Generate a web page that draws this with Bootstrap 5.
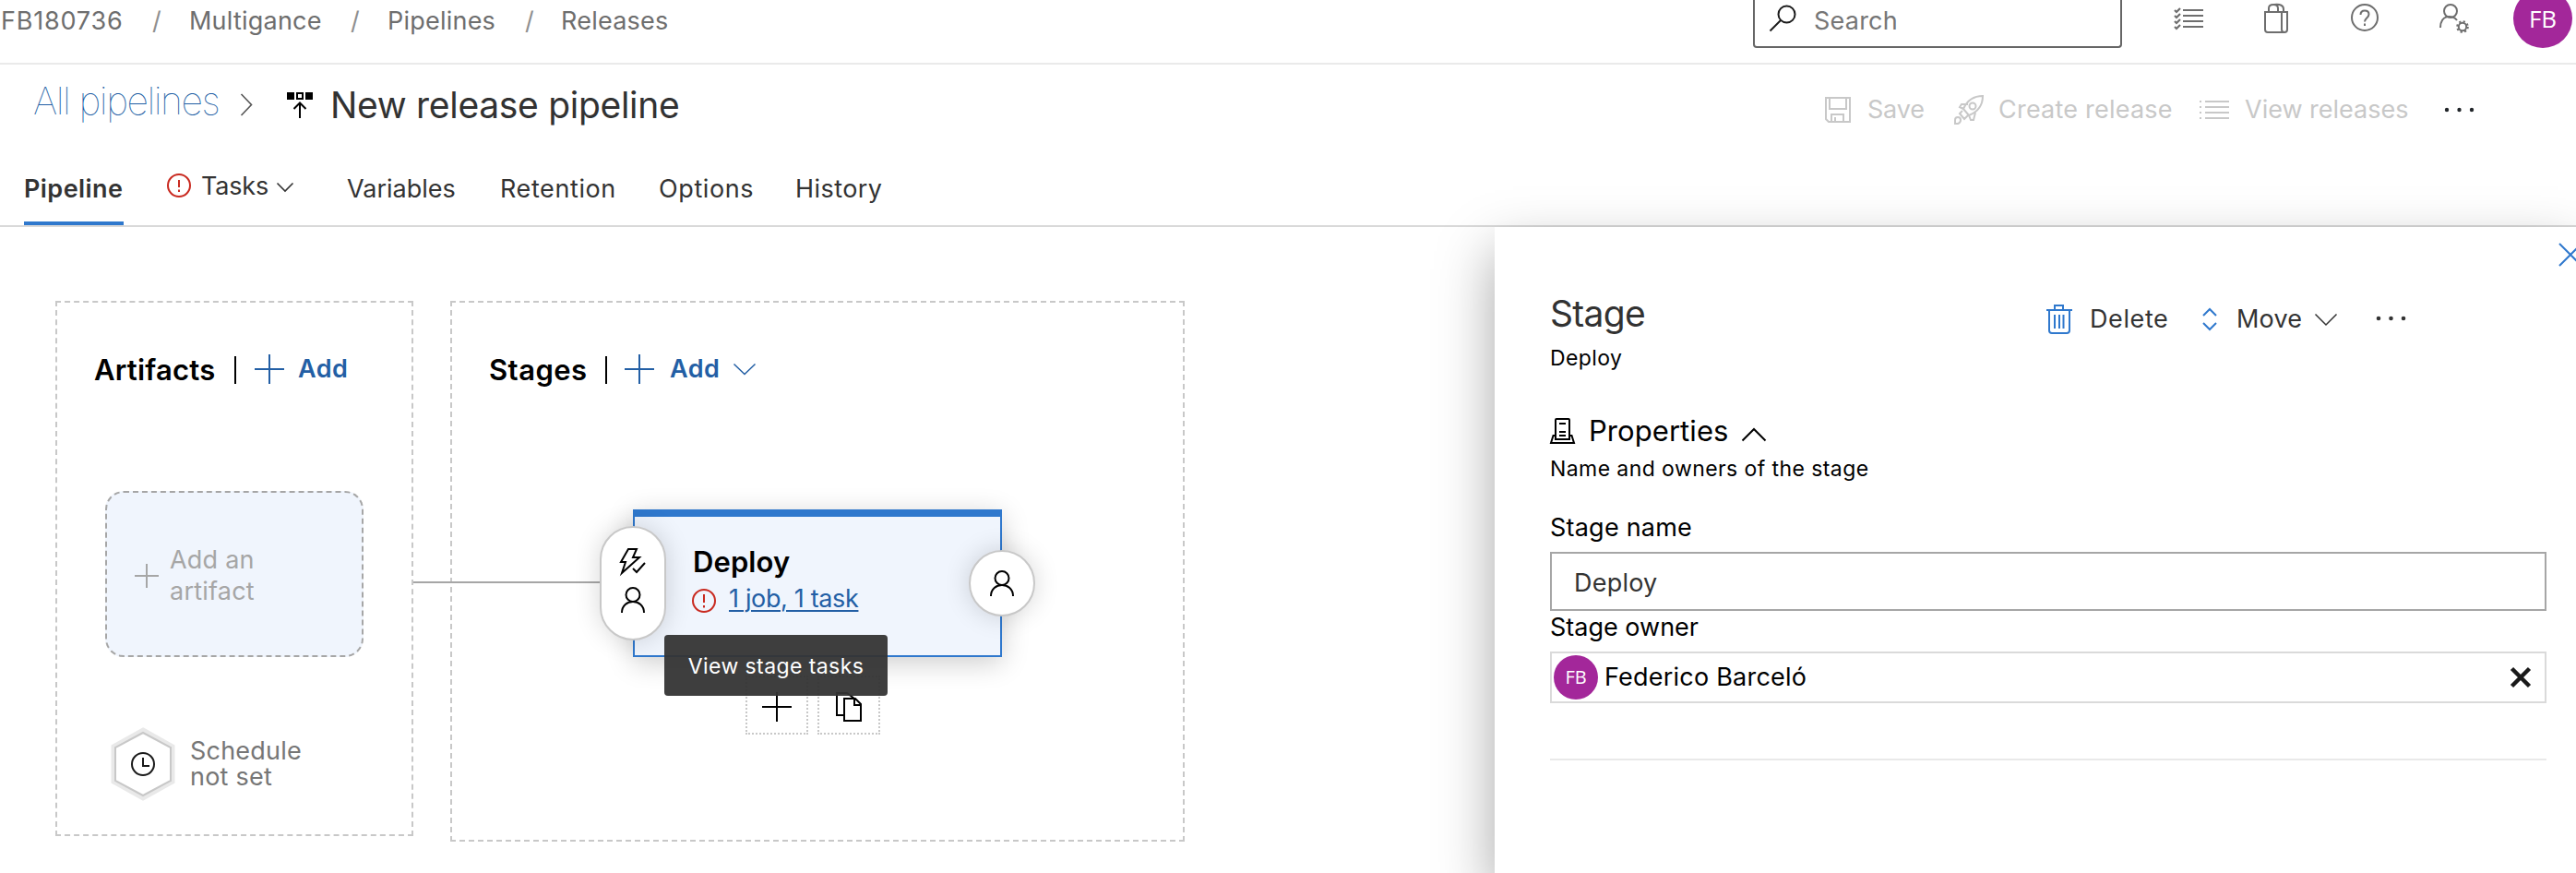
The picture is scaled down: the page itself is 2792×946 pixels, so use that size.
<!DOCTYPE html>
<html lang="en">
<head>
<meta charset="utf-8">
<title>New release pipeline</title>
<link href="https://cdn.jsdelivr.net/npm/bootstrap@5.3.0/dist/css/bootstrap.min.css" rel="stylesheet">
<style>
  body { font-family: Inter, "Liberation Sans", sans-serif; font-size: 27px; line-height: 44px; letter-spacing: .22px; color: #000; background: #fff; width: 2792px; height: 946px; overflow: hidden; white-space: nowrap; }
  svg { display: block; fill: none; stroke: currentColor; stroke-width: 2; overflow: visible; }
  a { color: inherit; text-decoration: none; }
  .ls-n2 { letter-spacing: -.2px; } .ls-0 { letter-spacing: 0; } .ls-4 { letter-spacing: .44px; } .ls-6 { letter-spacing: .6px; } .ls-8 { letter-spacing: .81px; }
  /* column tracks of the one-line rows */
  .tracks { display: grid; }
  .top-bar { height: 70px; border-bottom: 2px solid #eaeaea; color: #6e6e6e; grid-template-columns: 1900px 456px 98px 94px 96px 80px 64px; }
  .crumbs { grid-template-columns: 164px 40px 175px 40px 149px 39px auto; padding: 1px 0 0 1px; }
  .crumbs .sep { color: #8f8f8f; }
  .search-box { width: 400px; height: 52px; border: 2px solid #666; border-top: 0; border-radius: 0 0 4px 4px; color: #767676; padding: 1px 0 0 16px; gap: 20px; }
  .search-box svg { margin-top: 5px; color: #1a1a1a; }
  .face { background: #a3279a; color: #fff; border-radius: 50%; font-family: "Open Sans", sans-serif; font-weight: 400; letter-spacing: 0; display: flex; align-items: center; justify-content: center; flex: none; }
  .face-lg { width: 64px; height: 64px; margin-top: -12px; font-size: 26px; }
  .face-sm { width: 48px; height: 48px; font-size: 20px; }
  .title-bar { height: 88px; grid-template-columns: 36px 224px 50px 48px 1620px auto; }
  .crumb-link { font-size: 41px; font-weight: 100; letter-spacing: -1.5px; color: #235fa5; padding-bottom: 10px; }
  .page-title { font-size: 39px; letter-spacing: -.3px; color: #323232; }
  .tools { grid-template-columns: 46px 94px 48px 218px 49px 214px auto; color: #c8c8c8; padding-top: 9px; }
  .tab-bar { height: 88px; border-bottom: 2px solid #d9d9d9; color: #333; padding-left: 26px; grid-template-columns: 155px 37px 82px 76px 166px 172px 148px auto; }
  .tab-bar > * { height: 86px; padding-top: 25px; }
  .tab-bar .active { font-weight: 600; border-bottom: 4px solid #2f78cd; width: 108px; }
  .tab-bar .up { padding-top: 22px; }
  .tab-bar .tab-caret { padding-top: 40px; }
  .warn { stroke: #c92a20; }
  .board { width: 1620px; height: 700px; padding: 80px 0 0 60px; gap: 40px; }
  .zone { border: 2px dashed #c8c8c8; }
  .zone-a { width: 388px; height: 580px; } .zone-s { width: 796px; height: 586px; }
  .zone-head { height: 44px; margin-top: 51px; }
  .zone-a .zone-head { margin-left: 40px; grid-template-columns: 152px 22px 47px auto; }
  .zone-s .zone-head { margin-left: 40px; grid-template-columns: 126px 21px 49px 69px auto; }
  .zone-name { font-size: 31px; font-weight: 600; }
  .rule-v { width: 2px; height: 30px; background: #000; }
  .add { color: #235fa5; font-weight: 600; margin-top: -2px; }
  .add-slot { width: 280px; height: 180px; margin: 109px 0 0 52px; border: 2px dashed #a6a6a6; border-radius: 20px; background: #f0f5fd; color: #a6a6a6; padding: 4px 0 0 30px; gap: 12px; line-height: 34px; }
  .schedule { margin: 76px 0 0 57px; gap: 15px; color: #767676; line-height: 28px; }
  .wire { position: absolute; left: -42px; top: 302px; width: 204px; height: 2px; background: #a6a6a6; }
  .stage { width: 400px; height: 160px; margin: 129px 0 0 196px; border: 2px solid #2f78cd; border-top-width: 8px; background: #f0f5fd; box-shadow: 0 6px 28px rgba(0,0,0,.2); padding: 27px 0 0 62px; }
  .stage-name { font-size: 31px; font-weight: 600; letter-spacing: .1px; height: 46px; padding-left: 1px; }
  .stage-link { color: #235fa5; letter-spacing: -.35px; line-height: 32px; text-decoration: underline; text-decoration-thickness: 2px; text-underline-offset: 3px; margin-left: 14px; }
  .gate { position: absolute; background: #fff; border: 2px solid #c8c8c8; border-radius: 36px; width: 72px; box-shadow: 0 0 28px rgba(0,0,0,.16); display: flex; flex-direction: column; align-items: center; justify-content: center; gap: 14px; }
  .gate-pre { left: -38px; top: 10px; height: 124px; padding-bottom: 6px; } .gate-post { right: -38px; top: 36px; height: 72px; }
  .tip { position: absolute; left: 32px; top: 128px; width: 242px; height: 66px; border-radius: 4px; background: rgba(52,52,52,.95); color: #fff; font-size: 23px; letter-spacing: .42px; line-height: 68px; text-align: center; z-index: 3; }
  .quick { margin: 20px 0 0 318px; gap: 10px; }
  .quick > div { width: 68px; height: 64px; border: 2px dotted #c8c8c8; padding: 16px; }
  .side { width: 1172px; height: 700px; background: #fff; box-shadow: 0 26px 58px rgba(0,0,0,.35); padding: 0 32px 0 60px; z-index: 2; }
  .side-head { height: 108px; padding-top: 52px; }
  .side-title { font-size: 39px; line-height: 48px; letter-spacing: -.7px; color: #323232; width: 538px; }
  .side-tools { grid-template-columns: 47px 122px 37px 85px 64px auto; color: #333; padding-top: 4px; }
  .blue { color: #2f78cd; }
  .close { height: 18px; padding: 18px 0 0 1094px; color: #2f78cd; }
  .small-t { font-size: 23px; letter-spacing: .42px; line-height: 32px; }
  .field-label { display: block; margin-top: 26px; }
  .owner-label { display: block; line-height: 36px; margin-bottom: 8px; }
  .field { height: 64px; border: 2px solid #a6a6a6; padding: 10px 0 0 24px; color: #333; }
  .owner { height: 56px; border: 2px solid #dadada; padding: 0 15px 0 2px; gap: 7px; }
  .side-end { height: 62px; border-bottom: 2px solid #e9e9e9; }
  .sect { height: 44px; margin: 41px 0 3px; gap: 15px; font-size: 31px; letter-spacing: .06px; }
</style>
</head>
<body>
<header class="tracks top-bar">
  <nav class="tracks crumbs">
    <a class="ls-8" href="#">FB180736</a><span class="sep">/</span><a href="#">Multigance</a><span class="sep">/</span><a href="#">Pipelines</a><span class="sep">/</span><a href="#">Releases</a>
  </nav>
  <div class="search-box d-flex align-items-start">
    <svg width="28" height="28"><circle cx="18.500" cy="9.500" r="9"/><path d="M12 16 .5 27.500"/></svg>
    <span>Search</span>
  </div>
  <svg width="32" height="36"><path d="M10 11h22M10 17h22M10 23h22M10 29h22"/><path stroke-width="2.200" d="m1 11 2 2 4-4M1 17l2 2 4-4M1 23l2 2 4-4M1 29l2 2 4-4"/></svg>
  <svg width="28" height="38"><path d="M1 13h24v19q0 3-3 3H4q-3 0-3-3zM19 13v19q0 3 3 3M5 13V9q0-4 5-4t5 4v4M11 5q10-1 10 5v3"/></svg>
  <svg width="32" height="38"><circle cx="15" cy="19" r="14"/><path d="M10.500 16q0-4.500 4.500-4.500t4.500 4c0 4-4.500 4-4.500 8M15 25.500v2.500"/></svg>
  <svg width="34" height="40"><circle cx="12" cy="12" r="7"/><path d="M1 30c0-15 14-14 18-8"/><circle cx="25" cy="29" r="4.200"/><circle cx="25" cy="29" r="5.800" stroke-dasharray="2.200 2.355"/></svg>
  <div class="face face-lg">FB</div>
</header>

<div class="tracks title-bar align-items-center">
  <span></span><a class="crumb-link" href="#">All pipelines</a>
  <svg width="14" height="24"><path d="m1.500 0 11 11.500-11 11.500" stroke="#555" stroke-width="1.600"/></svg>
  <svg width="30" height="30"><path fill="currentColor" stroke="none" d="M1 1h8v8H1zM21 1h8v8h-8z"/><path d="M12 2h6v6h-6zM15 29V14M8.500 19l6.500-6.500 6.500 6.500"/></svg>
  <span class="page-title">New release pipeline</span>
  <div class="tracks tools align-items-center">
    <svg width="28" height="28"><path d="M1 1h26v26H4l-3-3zM5 1v12h18V1M7 27v-8h13v8M11 27v-5"/></svg><span class="ls-n2">Save</span>
    <svg width="32" height="32"><path d="M31 1c-10 0-17 5-21 14l6 7c10-4 15-11 15-21zM10 15l-4-2 2-3h7M16 22l2 5h3l2-8M9 17l-3 3 5 6 4-4M1 31v-4q0-3 3-3t3 3-3 4z"/><circle cx="20" cy="12" r="3.500"/></svg><span>Create release</span>
    <svg width="32" height="20"><path d="M6 1h26M6 7h26M6 13h26M6 19h26"/><path d="M0 1h2M0 7h2M0 13h2M0 19h2"/></svg><span class="ls-0">View releases</span>
    <svg width="34" height="6" class="text-dark"><g fill="currentColor" stroke="none"><circle cx="5" cy="3" r="2.200"/><circle cx="18.500" cy="3" r="2.200"/><circle cx="32" cy="3" r="2.200"/></g></svg>
  </div>
</div>

<nav class="tracks tab-bar">
  <a class="active ls-4" href="#">Pipeline</a>
  <span class="up"><svg class="mt-2" width="26" height="28"><g class="warn"><circle cx="13" cy="13" r="12"/><path d="M13 7v8M13 17.500v2.500"/></g></svg></span>
  <a class="up ls-n2" href="#">Tasks</a>
  <span class="tab-caret"><svg width="18" height="10"><path d="m.5.5 8.500 8.500L17.500.5" stroke-width="1.600"/></svg></span>
  <a class="ls-0" href="#">Variables</a><a class="ls-6" href="#">Retention</a><a class="ls-6" href="#">Options</a><a class="ls-4" href="#">History</a>
</nav>

<main class="d-flex">
  <div class="board d-flex align-items-start flex-shrink-0">
    <section class="zone zone-a">
      <div class="tracks zone-head align-items-center">
        <span class="zone-name">Artifacts</span><span class="rule-v"></span>
        <svg width="32" height="32" class="add"><path d="M16 0v32M0 16h32"/></svg><a class="add ls-4" href="#">Add</a>
      </div>
      <div class="add-slot d-flex align-items-center">
        <svg width="26" height="26"><path d="M13 0v26M0 13h26"/></svg>
        <span>Add an<br>artifact</span>
      </div>
      <div class="schedule d-flex align-items-center">
        <svg width="72" height="80"><path d="M36 3 68 21v38L36 77 4 59V21z" stroke="#e9e9e9" stroke-width="5"/><path d="M36 6 66 22v36L36 74 6 58V22z" stroke="#c8c8c8" fill="#fff"/><g stroke="#1a1a1a"><circle cx="36" cy="40" r="12"/><path d="M36 33v9h7"/></g></svg>
        <span>Schedule<br>not set</span>
      </div>
    </section>
    <section class="zone zone-s position-relative">
      <div class="wire"></div>
      <div class="tracks zone-head align-items-center">
        <span class="zone-name ls-4">Stages</span><span class="rule-v"></span>
        <svg width="32" height="32" class="add"><path d="M16 0v32M0 16h32"/></svg><a class="add ls-4" href="#">Add</a>
        <svg width="24" height="12" class="add"><path d="m.5.5 11.500 11 11.500-11" stroke-width="1.500"/></svg>
      </div>
      <div class="stage position-relative">
        <div class="stage-name">Deploy</div>
        <div class="d-flex align-items-center">
          <svg width="26" height="26" class="mt-1"><g class="warn"><circle cx="13" cy="13" r="12"/><path d="M13 6v9M13 18v2.500"/></g></svg>
          <a class="stage-link" href="#">1 job, 1 task</a>
        </div>
        <div class="gate gate-pre">
          <svg width="28" height="28"><path d="M9 1h9l-4 9h7L2 27l4-12H1zM14 22l4 4 9-10"/></svg>
          <svg width="26" height="28"><circle cx="13" cy="8.500" r="7.500"/><path d="M1 28c0-16 24-16 24 0"/></svg>
        </div>
        <div class="gate gate-post"><svg width="26" height="28"><circle cx="13" cy="8.500" r="7.500"/><path d="M1 28c0-16 24-16 24 0"/></svg></div>
        <div class="tip">View stage tasks</div>
      </div>
      <div class="quick d-flex">
        <div><svg width="32" height="32"><path d="M16 0v32M0 16h32"/></svg></div>
        <div><svg width="32" height="32"><path d="M11 25H3V1h11l8 6M11 7h12l6 6v18H11zM22 7v7h7"/></svg></div>
      </div>
    </section>
  </div>

  <aside class="side position-relative flex-shrink-0">
    <div class="close"><svg width="24" height="24"><path d="m0 0 24 24M24 0 0 24"/></svg></div>
    <div class="side-head d-flex">
      <h1 class="side-title m-0 fw-normal">Stage</h1>
      <div class="tracks side-tools align-items-center">
        <svg width="28" height="32" class="blue"><path d="M0 6h28M3 6v22q0 3 3 3h16q3 0 3-3V6M9 5V1h9v4M9 11v15M14 11v15M18.500 11v15"/></svg><span class="ls-6">Delete</span>
        <svg width="16" height="24" class="blue"><path d="m1 8 7-7 7 7M1 16l7 7 7-7"/></svg><span>Move</span>
        <svg width="24" height="13"><path d="m.5.5 11.500 11.500L23.500.5" stroke-width="1.500"/></svg>
        <svg width="34" height="6"><g fill="currentColor" stroke="none"><circle cx="5" cy="2" r="2.300"/><circle cx="18.500" cy="2" r="2.300"/><circle cx="32" cy="2" r="2.300"/></g></svg>
      </div>
    </div>
    <div class="small-t">Deploy</div>
    <div class="sect d-flex align-items-center">
      <svg width="27" height="28"><path d="M6 23V2q0-1 1-1h13q1 0 1 1v21zM10 6h7M10 15h7M10 19h7M5 19H3.500L1 27h25l-2.500-8H22"/></svg>
      <span>Properties</span>
      <svg class="mt-2" width="26" height="14"><path d="m.5 13.500 12.500-12.500 12.500 12.500"/></svg>
    </div>
    <div class="small-t">Name and owners of the stage</div>
    <label class="field-label">Stage name</label>
    <div class="field mt-1">Deploy</div>
    <label class="owner-label ls-0">Stage owner</label>
    <div class="owner d-flex align-items-center">
      <div class="face face-sm">FB</div><span class="flex-grow-1">Federico Barceló</span>
      <svg width="22" height="22"><path d="m1.500 1.500 19 19m0-19-19 19" stroke="#1a1a1a" stroke-width="4.500"/></svg>
    </div>
    <div class="side-end"></div>
  </aside>
</main>
<script src="https://cdn.jsdelivr.net/npm/bootstrap@5.3.0/dist/js/bootstrap.bundle.min.js"></script>
</body>
</html>
